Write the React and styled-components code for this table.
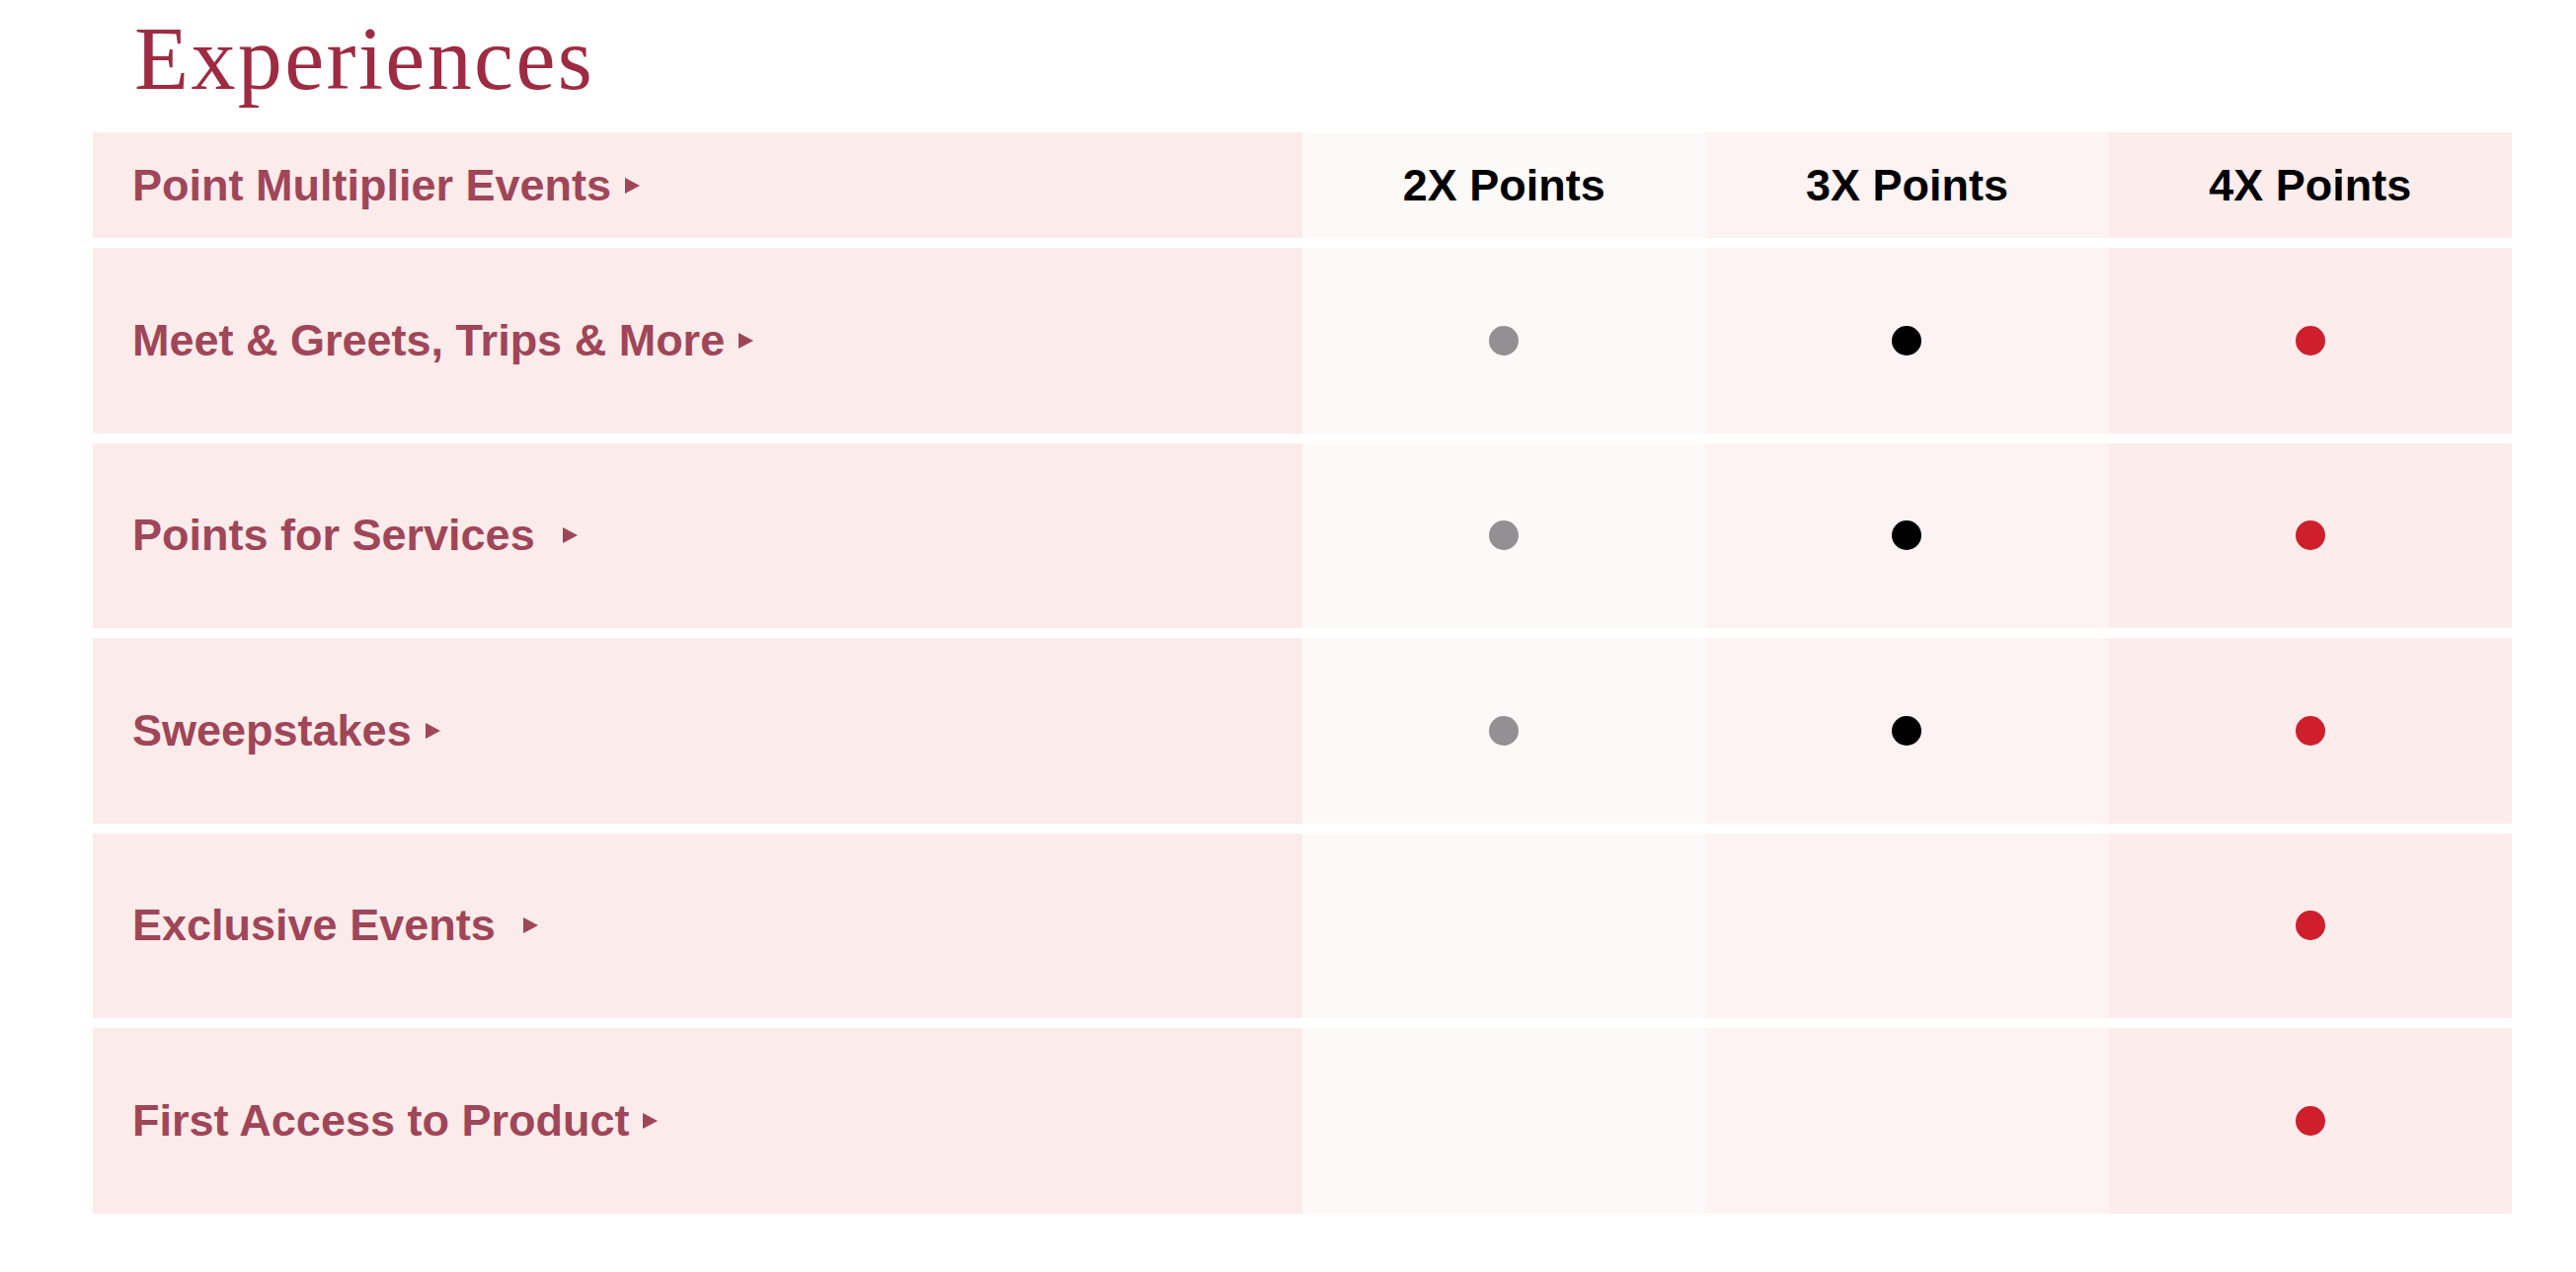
import React from "react";
import styled, { createGlobalStyle } from "styled-components";

const GlobalStyle = createGlobalStyle`
  html, body {
    margin: 0;
    padding: 0;
    background: #ffffff;
  }
  body {
    font-family: "Liberation Sans", Arial, sans-serif;
  }
`;

const Page = styled.main`
  width: 2450px;
  padding: 15px 0 40px 94px;
`;

const Heading = styled.h1`
  margin: 0 0 29px 0;
  padding-left: 42px;
  font-family: "Liberation Serif", "Times New Roman", serif;
  font-weight: 400;
  font-size: 90px;
  line-height: 90px;
  letter-spacing: 2.4px;
  color: #9e2b42;
`;

const Table = styled.div`
  display: flex;
  flex-direction: column;
  gap: 10px;
`;

const Row = styled.div`
  display: grid;
  grid-template-columns: 50% 1fr 1fr 1fr;
  height: ${(p) => (p.$header ? "107px" : "187.5px")};
`;

const tones = {
  label: "#fcebeb",
  two: "#fcfaf9",
  three: "#fdf3f3",
  four: "#fcecec",
};

const LabelCell = styled.div`
  display: flex;
  align-items: center;
  padding-left: 40px;
  background: ${tones.label};
  color: #9f4658;
  font-family: "Liberation Sans", Arial, sans-serif;
  font-weight: 700;
  font-size: 45px;
  white-space: pre;
`;

const ValueCell = styled.div`
  display: flex;
  align-items: center;
  justify-content: center;
  background: ${(p) => tones[p.$tone]};
  color: #000000;
  font-family: "Liberation Sans", Arial, sans-serif;
  font-weight: 700;
  font-size: 45px;
`;

const Caret = styled.svg`
  flex: none;
  width: 15px;
  height: 16px;
  margin-left: ${(p) => (p.$wide ? "28px" : "14px")};
  fill: #9f4658;
`;

const dotColors = {
  two: "#939093",
  three: "#000000",
  four: "#cf1f2c",
};

const Dot = styled.span`
  display: block;
  width: 30px;
  height: 30px;
  border-radius: 50%;
  background: ${(p) => dotColors[p.$tone]};
`;

const Arrow = ({ wide }) => (
  <Caret $wide={wide} viewBox="0 0 15 16" aria-hidden="true">
    <polygon points="0,0 15,8 0,16" />
  </Caret>
);

const rows = [
  { label: "Meet & Greets, Trips & More", wide: false, levels: ["two", "three", "four"] },
  { label: "Points for Services", wide: true, levels: ["two", "three", "four"] },
  { label: "Sweepstakes", wide: false, levels: ["two", "three", "four"] },
  { label: "Exclusive Events", wide: true, levels: ["four"] },
  { label: "First Access to Product", wide: false, levels: ["four"] },
];

const columns = [
  { tone: "two", title: "2X Points" },
  { tone: "three", title: "3X Points" },
  { tone: "four", title: "4X Points" },
];

export default function App() {
  return (
    <>
      <GlobalStyle />
      <Page>
        <Heading>Experiences</Heading>
        <Table>
          <Row $header>
            <LabelCell>
              Point Multiplier Events
              <Arrow />
            </LabelCell>
            {columns.map((c) => (
              <ValueCell key={c.tone} $tone={c.tone}>
                {c.title}
              </ValueCell>
            ))}
          </Row>
          {rows.map((r) => (
            <Row key={r.label}>
              <LabelCell>
                {r.label}
                <Arrow wide={r.wide} />
              </LabelCell>
              {columns.map((c) => (
                <ValueCell key={c.tone} $tone={c.tone}>
                  {r.levels.includes(c.tone) && <Dot $tone={c.tone} />}
                </ValueCell>
              ))}
            </Row>
          ))}
        </Table>
      </Page>
    </>
  );
}
